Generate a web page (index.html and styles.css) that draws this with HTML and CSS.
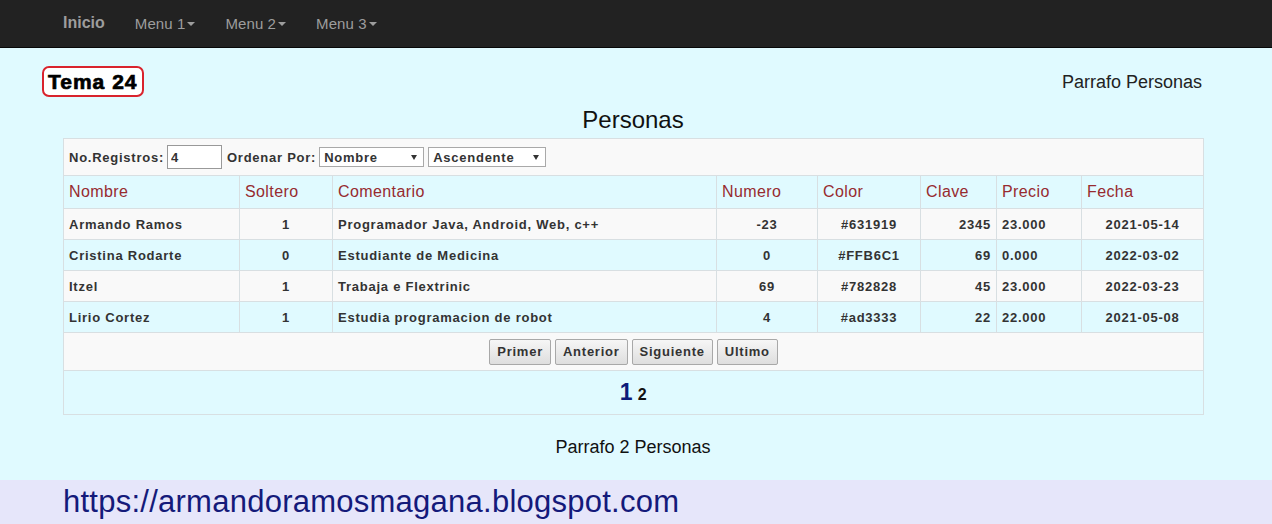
FILE: index.html
```html
<!DOCTYPE html>
<html lang="es">
<head>
<meta charset="utf-8">
<title>Personas</title>
<link rel="stylesheet" href="styles.css">
</head>
<body>
<nav class="navbar">
  <ul class="nav">
    <li class="brand">Inicio</li>
    <li class="menu">Menu 1<span class="caret"></span></li>
    <li class="menu">Menu 2<span class="caret"></span></li>
    <li class="menu">Menu 3<span class="caret"></span></li>
  </ul>
</nav>
<main class="page">
  <div class="container">
    <div class="topline">
      <div class="tema">Tema 24</div>
      <p class="parrafo">Parrafo Personas</p>
    </div>
    <h2 class="title">Personas</h2>
    <table class="grid">
      <colgroup>
        <col class="c1"><col class="c2"><col class="c3"><col class="c4"><col class="c5"><col class="c6"><col class="c7"><col class="c8">
      </colgroup>
      <tr class="toolbar">
        <td colspan="8">
          <div class="tools">
            <label>No.Registros:</label>
            <input class="num" type="text" value="4">
            <label class="ord">Ordenar Por:</label>
            <span class="sel sel1"><select><option>Nombre</option></select></span>
            <span class="sel sel2"><select><option>Ascendente</option></select></span>
          </div>
        </td>
      </tr>
      <tr class="head">
        <th>Nombre</th><th>Soltero</th><th>Comentario</th><th>Numero</th><th>Color</th><th>Clave</th><th>Precio</th><th>Fecha</th>
      </tr>
      <tr class="odd">
        <td>Armando Ramos</td><td class="ctr">1</td><td>Programador Java, Android, Web, c++</td><td class="ctr">-23</td><td class="ctr">#631919</td><td class="rt">2345</td><td>23.000</td><td class="ctr">2021-05-14</td>
      </tr>
      <tr class="even">
        <td>Cristina Rodarte</td><td class="ctr">0</td><td>Estudiante de Medicina</td><td class="ctr">0</td><td class="ctr">#FFB6C1</td><td class="rt">69</td><td>0.000</td><td class="ctr">2022-03-02</td>
      </tr>
      <tr class="odd">
        <td>Itzel</td><td class="ctr">1</td><td>Trabaja e Flextrinic</td><td class="ctr">69</td><td class="ctr">#782828</td><td class="rt">45</td><td>23.000</td><td class="ctr">2022-03-23</td>
      </tr>
      <tr class="even">
        <td>Lirio Cortez</td><td class="ctr">1</td><td>Estudia programacion de robot</td><td class="ctr">4</td><td class="ctr">#ad3333</td><td class="rt">22</td><td>22.000</td><td class="ctr">2021-05-08</td>
      </tr>
      <tr class="buttons">
        <td colspan="8">
          <div class="btns">
            <button>Primer</button><button>Anterior</button><button>Siguiente</button><button>Ultimo</button>
          </div>
        </td>
      </tr>
      <tr class="pages">
        <td colspan="8"><span class="p-cur">1</span> <span class="p-next">2</span></td>
      </tr>
    </table>
    <p class="parrafo2">Parrafo 2 Personas</p>
  </div>
</main>
<footer class="footer">
  <span class="link">https://armandoramosmagana.blogspot.com</span>
</footer>
</body>
</html>
```

FILE: styles.css
```css
html, body {
  margin: 0;
  padding: 0;
}
body {
  font-family: "Liberation Sans", Arial, sans-serif;
  background: #e0faff;
  color: #333;
  width: 1272px;
  height: 524px;
  overflow: hidden;
}

/* navbar */
.navbar {
  height: 48px;
  box-sizing: border-box;
  background: #222;
  border-bottom: 1px solid #080808;
}
.nav {
  list-style: none;
  margin: 0;
  padding: 0 0 0 48px;
  display: flex;
  height: 47px;
  align-items: center;
}
.nav li {
  padding: 0 15px;
  color: #9d9d9d;
}
.brand {
  font-size: 16px;
  font-weight: bold;
  margin-top: -2px;
}
.menu {
  font-size: 15px;
  letter-spacing: 0.1px;
  display: flex;
  align-items: center;
  margin-top: -1px;
}
.caret {
  display: inline-block;
  width: 0;
  height: 0;
  border-top: 4px solid #9d9d9d;
  border-left: 4px solid transparent;
  border-right: 4px solid transparent;
  margin-left: 2px;
  margin-top: 2px;
}

/* page */
.page {
  height: 432px;
  box-sizing: border-box;
  padding-left: 63px;
}
.container {
  width: 1140px;
}
.topline {
  display: flex;
  justify-content: space-between;
  align-items: center;
  padding-top: 18px;
  margin-left: -21px;
}
.tema {
  height: 31px;
  box-sizing: border-box;
  border: 2px solid #d9232d;
  border-radius: 7px;
  background: #fff;
  padding: 0 4px 0 4px;
  font-size: 21px;
  font-weight: 900;
  letter-spacing: 1px;
  color: #000;
  line-height: 27px;
  -webkit-text-stroke: 0.7px #000;
}
.parrafo {
  margin: 0;
  font-size: 18px;
  color: #222;
  padding-right: 1px;
  padding-top: 1px;
}
.title {
  margin: 9px 0 4px;
  text-align: center;
  font-size: 24px;
  line-height: 28px;
  font-weight: normal;
  color: #111;
}

/* table */
.grid {
  width: 1140px;
  table-layout: fixed;
  border-collapse: collapse;
  border: 1px solid #d6e4e8;
}
.c1 { width: 176px; }
.c2 { width: 93px; }
.c3 { width: 384px; }
.c4 { width: 101px; }
.c5 { width: 103px; }
.c6 { width: 76px; }
.c7 { width: 85px; }
.c8 { width: 122px; }

.grid td, .grid th {
  border: 1px solid #d8dfe2;
  padding: 0 5px;
  text-align: left;
}
.grid td {
  font-size: 13px;
  font-weight: bold;
  color: #333;
  letter-spacing: 0.75px;
  height: 30px;
}
.grid th {
  font-size: 16px;
  font-weight: normal;
  color: #972b2f;
  height: 31px;
  letter-spacing: 0.4px;
  padding-bottom: 1px;
}
.toolbar td {
  height: 36px;
  background: #f9f9f9;
}
.odd td { background: #f9f9f9; }
.even td, .head th { background: #e0faff; }
.ctr { text-align: center !important; }
.rt { text-align: right !important; }

.tools {
  display: flex;
  align-items: center;
}
.tools label {
  font-size: 13px;
  font-weight: bold;
  color: #333;
}
.num {
  width: 55px;
  height: 24px;
  box-sizing: border-box;
  margin: 0 0 0 3px;
  border: 1px solid #999;
  border-radius: 0;
  padding: 0 3px;
  font: bold 13px "Liberation Sans", Arial, sans-serif;
  color: #333;
  letter-spacing: 0.75px;
  background: #fff;
}
.ord { margin-left: 5px; }
.sel {
  position: relative;
  display: inline-block;
  margin-left: 3px;
}
.sel select {
  appearance: none;
  -webkit-appearance: none;
  height: 20px;
  box-sizing: border-box;
  border: 1px solid #a9a9a9;
  border-radius: 0;
  background: #fff;
  padding: 0 4px;
  font: bold 13px "Liberation Sans", Arial, sans-serif;
  letter-spacing: 0.75px;
  color: #333;
  display: block;
}
.sel1 select { width: 105px; }
.sel2 { margin-left: 4px; }
.sel2 select { width: 118px; }
.sel::after {
  content: "";
  position: absolute;
  right: 7px;
  top: 8px;
  border-top: 5px solid #333;
  border-left: 3px solid transparent;
  border-right: 3px solid transparent;
}

.buttons td {
  height: 37px;
  background: #f9f9f9;
}
.btns {
  display: flex;
  justify-content: center;
  gap: 4px;
}
.btns button {
  height: 26px;
  box-sizing: border-box;
  border: 1px solid #a8a8a8;
  border-radius: 2px;
  background: linear-gradient(#f6f6f6, #dedede);
  font: bold 13px "Liberation Sans", Arial, sans-serif;
  letter-spacing: 0.75px;
  color: #333;
  padding: 0 7px;
}
.pages td {
  height: 43px;
  background: #e0faff;
  text-align: center;
  padding-top: 0;
}
.p-cur {
  font-size: 23px;
  color: #0d1b7a;
  font-weight: bold;
}
.p-next {
  font-size: 16px;
  color: #111;
  font-weight: bold;
}

.parrafo2 {
  margin: 22px 0 0;
  text-align: center;
  font-size: 18px;
  color: #111;
}

/* footer */
.footer {
  height: 44px;
  background: #e6e6fa;
  padding-left: 63px;
  box-sizing: border-box;
}
.link {
  font-size: 31px;
  letter-spacing: 0.25px;
  line-height: 44px;
  color: #141a7a;
}
```
